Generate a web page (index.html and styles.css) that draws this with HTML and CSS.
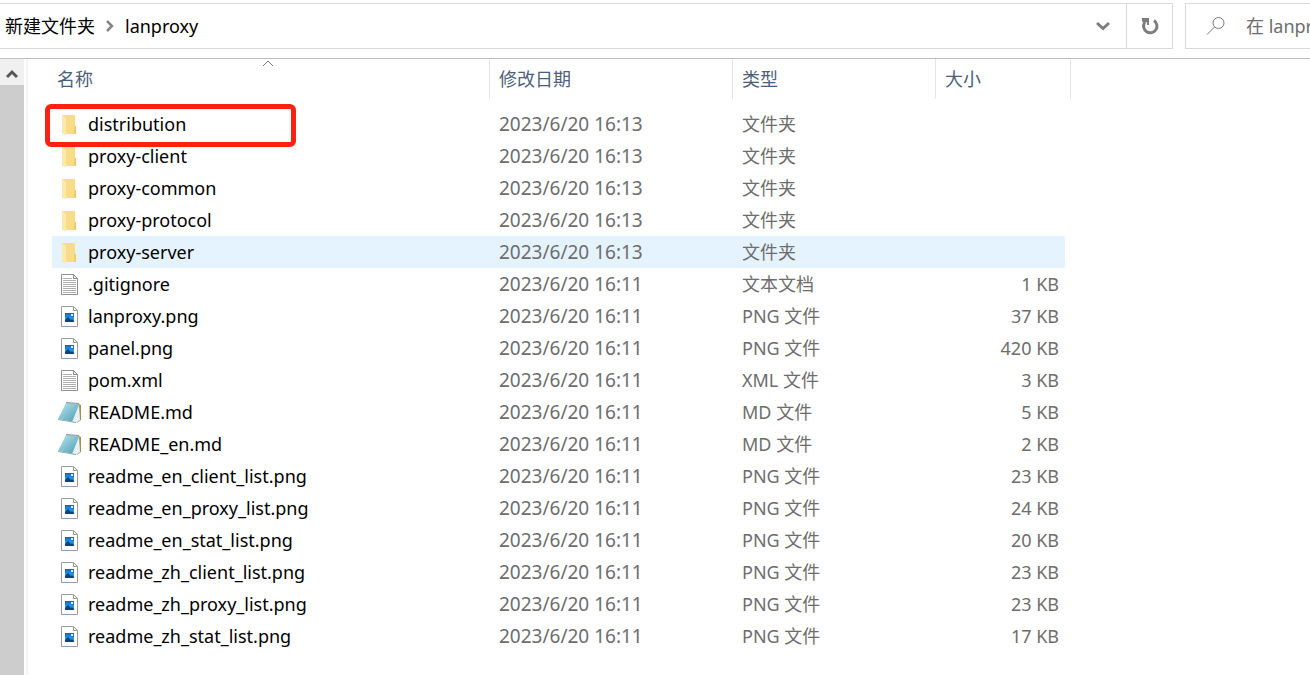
FILE: index.html
```html
<!DOCTYPE html>
<html lang="zh-CN">
<head>
    <meta charset="UTF-8">
    <meta name="viewport" content="width=device-width, initial-scale=1.0">
    <title>lanproxy</title>
    <link rel="stylesheet" href="styles.css">
</head>
<body>

<!-- file type icons -->
<svg class="defs" aria-hidden="true">
    <defs>
        <linearGradient id="pad" x1="0" y1="0" x2="1" y2="1">
            <stop offset="0" stop-color="#c5e6ee"/>
            <stop offset="1" stop-color="#3f9db5"/>
        </linearGradient>
        <linearGradient id="pic" x1="0" y1="0" x2="0" y2="1">
            <stop offset="0" stop-color="#0f66c8"/>
            <stop offset="1" stop-color="#3fb0f5"/>
        </linearGradient>
    </defs>
    <symbol id="folder" viewBox="0 0 24 24">
        <path d="M5 2h13v11h1v8H5z" fill="#f8dc8a"/>
        <path d="M17 13h2v8h-2z" fill="#efcb6c"/>
        <path d="M5 2l4 3v18l-4-3z" fill="#fde9ae"/>
    </symbol>
    <symbol id="text" viewBox="0 0 24 24">
        <path d="M4.500 1.500h12l4 4v16h-16z" fill="#fff" stroke="#8f8f8f"/>
        <path d="M16.500 1.500v4h4" fill="none" stroke="#8f8f8f"/>
        <path d="M6 5.500h9M6 7.500h13M6 9.500h13M6 11.500h13M6 13.500h13M6 15.500h13M6 17.500h13M6 19.500h13" stroke="#b0b0b0"/>
    </symbol>
    <symbol id="image" viewBox="0 0 24 24">
        <path d="M4.500 1.500h12l4 4v16h-16z" fill="#fff" stroke="#9a9a9a"/>
        <path d="M16.500 1.500v4h4" fill="none" stroke="#9a9a9a"/>
        <path d="M8 8h9v9H8z" fill="url(#pic)"/>
        <path d="M8 17v-2l3-3 3 3 1-1 2 2v1z" fill="#0b3f78"/>
        <path d="M14 9h2v2h-2z" fill="#e6f4ff"/>
    </symbol>
    <symbol id="notepad" viewBox="0 0 24 24">
        <path d="M9 2l13 1 2 1v15l-4 3z" fill="#a98c5c"/>
        <path d="M9 2l13 1-4 18L1 18z" fill="url(#pad)"/>
        <path d="M22 4l1 15-4 3-4-1z" fill="#e8f1f5"/>
        <path d="M1 18l18 3v1L1 19z" fill="#8fa9b0"/>
        <path d="M9 1.500l13 1" stroke="#8d9a9d" fill="none"/>
    </symbol>
</svg>

<div class="toolbar">
    <div class="address">
        <nav class="crumbs">
            <button type="button">新建文件夹</button>
            <svg class="crumb_arrow" viewBox="0 0 10 12"><path d="M2 1l5 5-5 5" fill="none" stroke="#858585" stroke-width="2.500"/></svg>
            <button type="button">lanproxy</button>
        </nav>
        <button class="history" type="button" aria-label="历史记录">
            <svg viewBox="0 0 16 10"><path d="M2 2l6 5.500L14 2" fill="none" stroke="#7d7d7d" stroke-width="3"/></svg>
        </button>
        <button class="refresh" type="button" aria-label="刷新">
            <svg viewBox="0 0 18 18"><path d="M13 3.500A6.700 6.700 0 1 1 3.600 5.500" fill="none" stroke="#7d7d7d" stroke-width="3"/><path d="M1 1h7v7H6V5L3 6.500 1 4z" fill="#7d7d7d"/></svg>
        </button>
    </div>
    <label class="search">
        <svg viewBox="0 0 20 20"><circle cx="12.500" cy="7" r="5.500" fill="none" stroke="#777"/><path d="M8.500 11L1 18.500" stroke="#777"/></svg>
        <input type="text" aria-label="搜索" placeholder="在 lanproxy 中搜索">
    </label>
</div>

<div class="content">
    <div class="scrollbar">
        <button type="button" aria-label="向上滚动">
            <svg viewBox="0 0 12 10"><path d="M1 8l5-5 5 5" fill="none" stroke="#555" stroke-width="3"/></svg>
        </button>
    </div>
    <main class="pane">
        <table class="files">
            <colgroup>
                <col class="col_name"><col class="col_date"><col class="col_type"><col class="col_size">
            </colgroup>
            <thead>
                <tr>
                    <th aria-sort="ascending"><button type="button">名称</button><svg class="sort" viewBox="0 0 12 7"><path d="M1 6l5-5 5 5" fill="none" stroke="#777"/></svg></th>
                    <th><button type="button">修改日期</button></th>
                    <th><button type="button">类型</button></th>
                    <th><button type="button">大小</button></th>
                </tr>
            </thead>
            <tbody>
                <tr class="marked"><td><svg class="icon"><use href="#folder"/></svg>distribution</td><td>2023/6/20 16:13</td><td>文件夹</td><td></td></tr>
                <tr><td><svg class="icon"><use href="#folder"/></svg>proxy-client</td><td>2023/6/20 16:13</td><td>文件夹</td><td></td></tr>
                <tr><td><svg class="icon"><use href="#folder"/></svg>proxy-common</td><td>2023/6/20 16:13</td><td>文件夹</td><td></td></tr>
                <tr><td><svg class="icon"><use href="#folder"/></svg>proxy-protocol</td><td>2023/6/20 16:13</td><td>文件夹</td><td></td></tr>
                <tr class="hover"><td><svg class="icon"><use href="#folder"/></svg>proxy-server</td><td>2023/6/20 16:13</td><td>文件夹</td><td></td></tr>
                <tr><td><svg class="icon"><use href="#text"/></svg>.gitignore</td><td>2023/6/20 16:11</td><td>文本文档</td><td>1 KB</td></tr>
                <tr><td><svg class="icon"><use href="#image"/></svg>lanproxy.png</td><td>2023/6/20 16:11</td><td>PNG 文件</td><td>37 KB</td></tr>
                <tr><td><svg class="icon"><use href="#image"/></svg>panel.png</td><td>2023/6/20 16:11</td><td>PNG 文件</td><td>420 KB</td></tr>
                <tr><td><svg class="icon"><use href="#text"/></svg>pom.xml</td><td>2023/6/20 16:11</td><td>XML 文件</td><td>3 KB</td></tr>
                <tr><td><svg class="icon"><use href="#notepad"/></svg>README.md</td><td>2023/6/20 16:11</td><td>MD 文件</td><td>5 KB</td></tr>
                <tr><td><svg class="icon"><use href="#notepad"/></svg>README_en.md</td><td>2023/6/20 16:11</td><td>MD 文件</td><td>2 KB</td></tr>
                <tr><td><svg class="icon"><use href="#image"/></svg>readme_en_client_list.png</td><td>2023/6/20 16:11</td><td>PNG 文件</td><td>23 KB</td></tr>
                <tr><td><svg class="icon"><use href="#image"/></svg>readme_en_proxy_list.png</td><td>2023/6/20 16:11</td><td>PNG 文件</td><td>24 KB</td></tr>
                <tr><td><svg class="icon"><use href="#image"/></svg>readme_en_stat_list.png</td><td>2023/6/20 16:11</td><td>PNG 文件</td><td>20 KB</td></tr>
                <tr><td><svg class="icon"><use href="#image"/></svg>readme_zh_client_list.png</td><td>2023/6/20 16:11</td><td>PNG 文件</td><td>23 KB</td></tr>
                <tr><td><svg class="icon"><use href="#image"/></svg>readme_zh_proxy_list.png</td><td>2023/6/20 16:11</td><td>PNG 文件</td><td>23 KB</td></tr>
                <tr><td><svg class="icon"><use href="#image"/></svg>readme_zh_stat_list.png</td><td>2023/6/20 16:11</td><td>PNG 文件</td><td>17 KB</td></tr>
            </tbody>
        </table>
    </main>
</div>

</body>
</html>
```
FILE: styles.css
```css
*, *::after {
  box-sizing: border-box;
}

body {
  margin: 0;
  min-height: 100vh;
  display: flex;
  flex-direction: column;
  background: #fff;
  color: #000;
  font-family: "Noto Sans", "Noto Sans CJK SC", sans-serif;
  font-size: 18px;
  line-height: 32px;
}

button, input {
  padding: 0;
  border: 0;
  background: none;
  color: inherit;
  font: inherit;
}

svg {
  flex: none;
}

.defs {
  position: absolute;
  width: 0;
  height: 0;
}

/* Address bar and search */
.toolbar {
  display: flex;
  gap: 12px;
  padding: 3px 0 9px;
  border-bottom: 1px solid #bdbdbd;
}

.address {
  flex: 1;
  display: flex;
  height: 46px;
  border: 1px solid #d9d9d9;
  border-left: 0;
}

.crumbs {
  flex: 1;
  display: flex;
  align-items: center;
  gap: 10px;
  padding-left: 5px;
}

.crumb_arrow {
  width: 10px;
  height: 12px;
}

.history, .refresh {
  display: flex;
  align-items: center;
  justify-content: center;
  width: 46px;
}

.history svg {
  width: 16px;
  height: 10px;
}

.refresh {
  border-left: 1px solid #d9d9d9;
}

.refresh svg {
  width: 18px;
  height: 18px;
}

.search {
  flex: 0 0 125px;
  display: flex;
  align-items: center;
  gap: 20px;
  padding-left: 20px;
  border: 1px solid #d9d9d9;
  border-right: 0;
  overflow: hidden;
}

.search svg {
  width: 20px;
  height: 20px;
}

.search input {
  flex: none;
  width: 180px;
}

.search input::placeholder {
  color: #6d6d6d;
  opacity: 1;
}

/* Scrollbar of the side tree */
.content {
  flex: 1;
  display: flex;
}

.scrollbar {
  flex: none;
  width: 24px;
  background: #cdcdcd;
}

.scrollbar button {
  display: flex;
  align-items: center;
  justify-content: center;
  width: 100%;
  height: 26px;
  padding-top: 4px;
  background: #f0f0f0;
}

.scrollbar svg {
  width: 12px;
  height: 10px;
}

.pane {
  flex: 1;
  margin-left: 2px;
  padding-left: 24px;
  border-left: 2px solid #f5f5f5;
}

/* File list */
.files {
  width: 1019px;
  table-layout: fixed;
  border-collapse: separate;
  border-spacing: 0;
}

.col_name { width: 438px; }
.col_date { width: 243px; }
.col_type { width: 203px; }
.col_size { width: 135px; }

th {
  position: relative;
  height: 40px;
  padding: 0 0 0 9px;
  border-right: 1px solid #e5e5e5;
  color: #4c607a;
  font-weight: normal;
  text-align: left;
}

th:first-child {
  padding-left: 5px;
}

.sort {
  position: absolute;
  top: 1px;
  left: 48%;
  width: 12px;
  height: 7px;
}

thead::after {
  content: "";
  display: block;
  height: 9px;
}

td {
  height: 32px;
  padding: 0 0 0 9px;
  color: #6d6d6d;
  white-space: nowrap;
}

td:first-child {
  position: relative;
  padding-left: 5px;
  color: #000;
}

td:nth-child(2) {
  font-size: 19px;
}

td:last-child {
  padding-right: 6px;
  border-right: 6px solid transparent;
  background-clip: padding-box;
  text-align: right;
}

.icon {
  width: 24px;
  height: 24px;
  margin-right: 7px;
  vertical-align: -6px;
}

.hover td {
  background-color: #e5f3ff;
}

/* Red frame round the marked folder */
.marked td:first-child::after {
  content: "";
  position: absolute;
  top: -4px;
  left: -7px;
  width: 251px;
  height: 43px;
  border: 5px solid #ff2012;
  border-radius: 6px;
}
```
